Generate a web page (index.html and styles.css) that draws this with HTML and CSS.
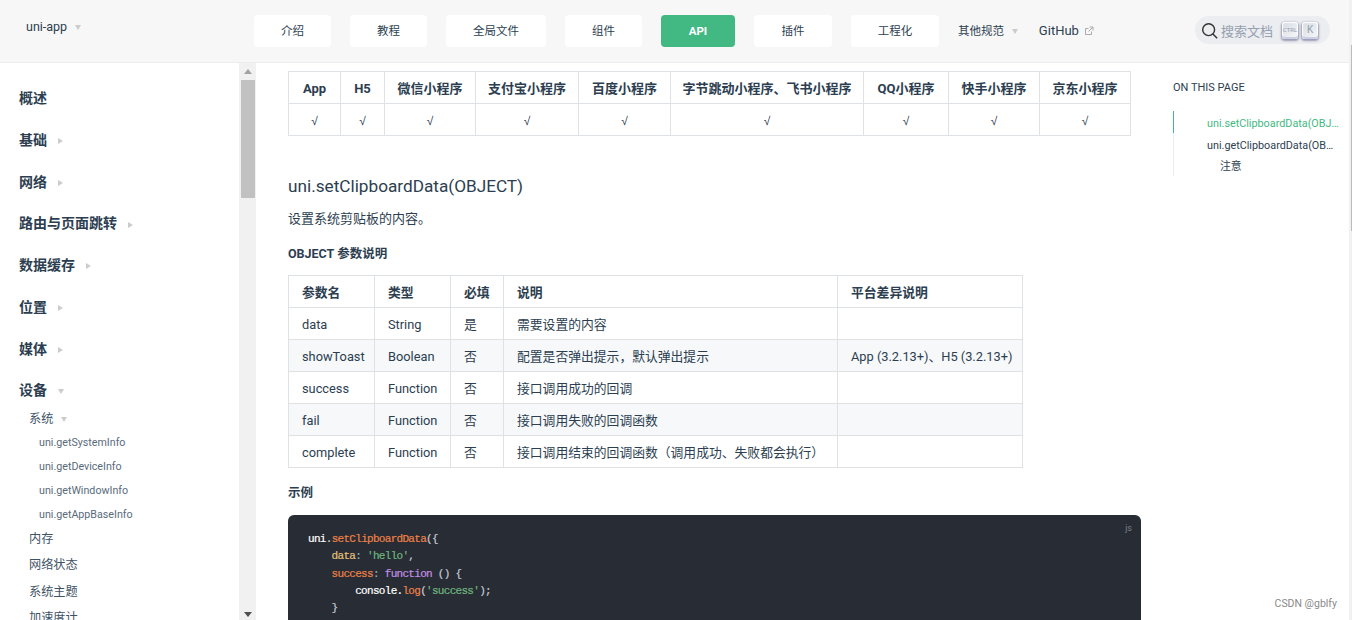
FILE: index.html
```html
<!DOCTYPE html>
<html lang="en">

<head>
  <meta charset="UTF-8">
  <title>uni-app API</title>
  <meta name="viewport" content="width=device-width, initial-scale=1.0">
  <link rel="stylesheet" href="styles.css">
</head>

<body>

  <header class="navbar">
    <div class="brand">uni-app <span class="arrow-down"></span></div>
    <nav class="nav-links">
      <a class="nav-btn btn-intro" href="#">介绍</a>
      <a class="nav-btn btn-tutorial" href="#">教程</a>
      <a class="nav-btn btn-global" href="#">全局文件</a>
      <a class="nav-btn btn-comp" href="#">组件</a>
      <a class="nav-btn btn-api active" href="#">API</a>
      <a class="nav-btn btn-plugin" href="#">插件</a>
      <a class="nav-btn btn-eng" href="#">工程化</a>
      <a class="nav-text nav-spec" href="#">其他规范 <span class="arrow-down"></span></a>
      <a class="nav-text nav-github" href="#">GitHub
        <svg class="ext-icon" viewBox="0 0 10 10" width="10" height="10">
          <path d="M7.5 5.500v3h-6v-6h3M5.500 1h3.500v3.500M9 1L4.500 5.500" fill="none" stroke="#aaa" stroke-width="1" />
        </svg>
      </a>
    </nav>
    <div class="search">
      <svg viewBox="0 0 20 20" width="17" height="17">
        <circle cx="9" cy="9" r="7" fill="none" stroke="#333" stroke-width="1.700" />
        <path d="M14 14l5 5" stroke="#333" stroke-width="1.700" />
      </svg>
      <span class="search-text">搜索文档</span>
      <kbd class="key key-ctrl">CTRL</kbd>
      <kbd class="key">K</kbd>
    </div>
  </header>

  <div class="layout">
    <aside class="sidebar">
      <ul class="side-list">
        <li class="side-top">概述</li>
        <li class="side-top">基础 <span class="arrow-right"></span></li>
        <li class="side-top">网络 <span class="arrow-right"></span></li>
        <li class="side-top">路由与页面跳转 <span class="arrow-right"></span></li>
        <li class="side-top">数据缓存 <span class="arrow-right"></span></li>
        <li class="side-top">位置 <span class="arrow-right"></span></li>
        <li class="side-top">媒体 <span class="arrow-right"></span></li>
        <li class="side-top">设备 <span class="arrow-down"></span></li>
        <li class="side-sub side-sys">系统 <span class="arrow-down"></span></li>
        <li class="side-leaf">uni.getSystemInfo</li>
        <li class="side-leaf">uni.getDeviceInfo</li>
        <li class="side-leaf">uni.getWindowInfo</li>
        <li class="side-leaf">uni.getAppBaseInfo</li>
        <li class="side-sub">内存</li>
        <li class="side-sub">网络状态</li>
        <li class="side-sub">系统主题</li>
        <li class="side-sub">加速度计</li>
      </ul>
    </aside>

    <div class="side-scrollbar">
      <span class="sb-up"></span>
      <span class="sb-thumb"></span>
      <span class="sb-down"></span>
    </div>

    <main class="content">
      <table class="doc-table support-table">
        <colgroup>
          <col class="c52"><col class="c44"><col class="c91"><col class="c103"><col class="c92"><col class="c193"><col class="c85"><col class="c91"><col class="c91">
        </colgroup>
        <tr>
          <th>App</th><th>H5</th><th>微信小程序</th><th>支付宝小程序</th><th>百度小程序</th><th>字节跳动小程序、飞书小程序</th><th>QQ小程序</th><th>快手小程序</th><th>京东小程序</th>
        </tr>
        <tr>
          <td>√</td><td>√</td><td>√</td><td>√</td><td>√</td><td>√</td><td>√</td><td>√</td><td>√</td>
        </tr>
      </table>

      <h3 class="api-title">uni.setClipboardData(OBJECT)</h3>
      <p class="api-desc">设置系统剪贴板的内容。</p>
      <p class="api-label">OBJECT 参数说明</p>

      <table class="doc-table param-table">
        <colgroup>
          <col class="c86"><col class="c76"><col class="c53"><col class="c334"><col class="c185">
        </colgroup>
        <tr><th>参数名</th><th>类型</th><th>必填</th><th>说明</th><th>平台差异说明</th></tr>
        <tr><td>data</td><td>String</td><td>是</td><td>需要设置的内容</td><td></td></tr>
        <tr><td>showToast</td><td>Boolean</td><td>否</td><td>配置是否弹出提示，默认弹出提示</td><td>App (3.2.13+)、H5 (3.2.13+)</td></tr>
        <tr><td>success</td><td>Function</td><td>否</td><td>接口调用成功的回调</td><td></td></tr>
        <tr><td>fail</td><td>Function</td><td>否</td><td>接口调用失败的回调函数</td><td></td></tr>
        <tr><td>complete</td><td>Function</td><td>否</td><td>接口调用结束的回调函数（调用成功、失败都会执行）</td><td></td></tr>
      </table>

      <p class="api-label example-label">示例</p>

      <div class="code-block">
        <span class="code-lang">js</span>
<pre><span class="c-white">uni</span>.<span class="c-orange">setClipboardData</span>({
    <span class="c-yellow">data</span><span class="c-teal">:</span> <span class="c-green">'hello'</span>,
    <span class="c-orange">success</span><span class="c-teal">:</span> <span class="c-purple">function</span> () {
        <span class="c-white">console.</span><span class="c-orange">log</span>(<span class="c-green">'success'</span>);
    }
</pre>
      </div>
    </main>

    <aside class="toc">
      <div class="toc-title">ON THIS PAGE</div>
      <ul class="toc-list">
        <li class="toc-item toc-active">uni.setClipboardData(OBJECT)</li>
        <li class="toc-item">uni.getClipboardData(OBJECT)</li>
        <li class="toc-item toc-sub">注意</li>
      </ul>
    </aside>
  </div>

  <div class="page-scrollbar"><span class="page-thumb"></span></div>
  <div class="watermark">CSDN @gblfy</div>

</body>

</html>
```

FILE: styles.css
```css
* {
  box-sizing: border-box;
  margin: 0;
  padding: 0;
}

html,
body {
  height: 620px;
  overflow: hidden;
}

body {
  font-family: Roboto, "Noto Sans CJK SC", sans-serif;
  font-size: 13px;
  color: #2c3e50;
  background: white;
}

ul {
  list-style: none;
}

a {
  color: inherit;
  text-decoration: none;
}

.arrow-down {
  display: inline-block;
  margin-left: 5px;
  vertical-align: middle;
  border-left: 3.500px solid transparent;
  border-right: 3.500px solid transparent;
  border-top: 5px solid #ccc;
}

.arrow-right {
  display: inline-block;
  margin-left: 8px;
  vertical-align: middle;
  border-top: 3.500px solid transparent;
  border-bottom: 3.500px solid transparent;
  border-left: 5px solid #ccc;
}

/* top bar */
.navbar {
  height: 63px;
  display: flex;
  background: #f7f7f7;
  border-bottom: 1px solid #eaecef;
}

.brand {
  width: 254px;
  padding: 17px 0 0 26px;
  font-size: 12.500px;
  line-height: 20px;
}

.nav-links {
  display: flex;
  align-items: flex-start;
  padding-top: 15px;
  gap: 19px;
}

.nav-btn {
  height: 32px;
  line-height: 32px;
  text-align: center;
  background: white;
  border-radius: 4px;
  font-size: 11.500px;
}

.btn-intro,
.btn-tutorial,
.btn-comp {
  width: 77px;
}

.btn-plugin {
  width: 78px;
}

.btn-global {
  width: 100px;
}

.btn-api {
  width: 74px;
}

.btn-eng {
  width: 88px;
}

.nav-btn.active {
  background: #42b983;
  color: white;
  font-weight: 700;
}

.nav-text {
  line-height: 32px;
  font-size: 11.500px;
  white-space: nowrap;
}

.nav-github {
  margin-left: 2px;
  font-size: 13px;
}

.ext-icon {
  margin-left: 2px;
  vertical-align: -1px;
}

.search {
  position: absolute;
  top: 16px;
  left: 1195px;
  width: 135px;
  height: 28px;
  display: flex;
  align-items: center;
  padding-left: 6px;
  background: #ebedf0;
  border-radius: 14px;
}

.search-text {
  margin-left: 3px;
  font-size: 13px;
  color: #969faf;
}

.key {
  width: 16px;
  height: 17px;
  margin-left: 4px;
  text-align: center;
  font-family: Roboto, sans-serif;
  font-size: 10px;
  line-height: 16px;
  color: #969faf;
  background: linear-gradient(-225deg, #d5dbe4, #f8f8f8);
  border-radius: 3px;
  box-shadow: inset 0 -2px 0 0 #cdcde6, inset 0 0 1px 1px #fff, 0 1px 2px 1px rgba(30, 35, 90, 0.4);
}

.key-ctrl {
  margin-left: 9px;
  font-size: 6px;
}

/* page body */
.layout {
  display: flex;
  height: 557px;
}

.sidebar {
  width: 239px;
  flex-shrink: 0;
  overflow: hidden;
  padding-top: 25px;
}

.side-top {
  height: 41.750px;
  line-height: 20px;
  padding-left: 19px;
  font-size: 14px;
  font-weight: 700;
}

.side-top .arrow-down {
  margin-left: 8px;
}

.side-sub {
  height: 26.400px;
  line-height: 20px;
  padding-left: 29px;
  font-size: 12.200px;
  color: #3e5266;
}

.side-sys {
  height: 24px;
  margin-top: -13px;
}

.side-leaf {
  height: 24px;
  line-height: 20px;
  padding-left: 39px;
  font-size: 10.700px;
  color: #5a6b7c;
}

.side-scrollbar {
  width: 17px;
  flex-shrink: 0;
  display: flex;
  flex-direction: column;
  align-items: center;
  background: #f1f1f1;
}

.sb-up {
  margin-top: 6px;
  border-left: 4px solid transparent;
  border-right: 4px solid transparent;
  border-bottom: 5px solid #a3a3a3;
}

.sb-thumb {
  width: 14px;
  height: 118px;
  margin-top: 6px;
  background: #c1c1c1;
}

.sb-down {
  margin-top: auto;
  margin-bottom: 3px;
  border-left: 4px solid transparent;
  border-right: 4px solid transparent;
  border-top: 5px solid #505050;
}

.content {
  width: 917px;
  flex-shrink: 0;
  padding: 8px 0 0 32px;
  overflow: hidden;
}

.doc-table {
  border-collapse: collapse;
  table-layout: fixed;
  font-size: 12.800px;
  line-height: 20px;
}

.doc-table th,
.doc-table td {
  height: 32px;
  padding: 2px 13px 0;
  border: 1px solid #dfe2e5;
  white-space: nowrap;
}

.doc-table th {
  font-weight: 700;
}

.support-table {
  width: 842px;
}

.support-table th,
.support-table td {
  padding: 2px 0 0;
  text-align: center;
}

.support-table th {
  font-size: 13px;
}

.support-table td {
  font-family: "Liberation Sans", sans-serif;
  font-size: 12px;
}

.param-table {
  width: 734px;
  margin-top: 11px;
  text-align: left;
}

.param-table tr:nth-child(2n+1) {
  background: #f6f8fa;
}

.param-table tr:first-child {
  background: white;
}

.param-table th {
  text-align: left;
}

.c52 { width: 52px; }
.c44 { width: 44px; }
.c91 { width: 91px; }
.c103 { width: 103px; }
.c92 { width: 92px; }
.c193 { width: 193px; }
.c85 { width: 85px; }
.c86 { width: 86px; }
.c76 { width: 76px; }
.c53 { width: 53px; }
.c334 { width: 334px; }
.c185 { width: 185px; }

.api-title {
  margin-top: 38px;
  font-size: 17.200px;
  font-weight: 400;
  line-height: 24px;
}

.api-desc {
  margin-top: 11px;
  font-size: 13px;
  line-height: 20px;
}

.api-label {
  margin-top: 15px;
  font-size: 12.500px;
  font-weight: 700;
  line-height: 20px;
}

.code-block {
  position: relative;
  width: 853px;
  height: 140px;
  margin-top: 12px;
  padding: 16px 20px;
  background: #282c34;
  border-radius: 6px;
}

.code-block pre {
  font-family: "Liberation Mono", monospace;
  font-size: 11px;
  letter-spacing: -0.7px;
  line-height: 17.300px;
  -webkit-text-stroke: 0.2px;
  color: #c5cbd6;
}

.code-lang {
  position: absolute;
  top: 8px;
  right: 9px;
  font-size: 9px;
  color: #7c8087;
}

.c-white { color: #fff; }
.c-orange { color: #ee8148; }
.c-yellow { color: #e5c07b; }
.c-green { color: #6fb57f; }
.c-purple { color: #c48fe6; }
.c-teal { color: #7fb8c4; }

/* right column */
.toc {
  width: 179px;
  flex-shrink: 0;
  padding: 15px 0 0 0;
  overflow: hidden;
}

.toc-title {
  font-size: 11px;
  line-height: 20px;
}

.toc-list {
  margin-top: 13px;
  width: 166px;
  border-left: 1px solid #eaecef;
}

.toc-item {
  height: 21.700px;
  padding-left: 33px;
  line-height: 25px;
  font-size: 10.800px;
  white-space: nowrap;
  overflow: hidden;
  text-overflow: ellipsis;
}

.toc-active {
  color: #42b983;
  margin-left: -1px;
  border-left: 1px solid #42b983;
}

.toc-sub {
  padding-left: 46px;
}

.page-scrollbar {
  position: absolute;
  top: 0;
  right: 0;
  width: 3px;
  height: 620px;
  background: #f1f1f1;
}

.page-thumb {
  display: block;
  width: 1px;
  height: 186px;
  margin: 45px 0 0 2px;
  background: #bbb;
}

.watermark {
  position: absolute;
  top: 597px;
  right: 15px;
  font-size: 10.500px;
  line-height: 14px;
  color: #8a8a8a;
}
```
